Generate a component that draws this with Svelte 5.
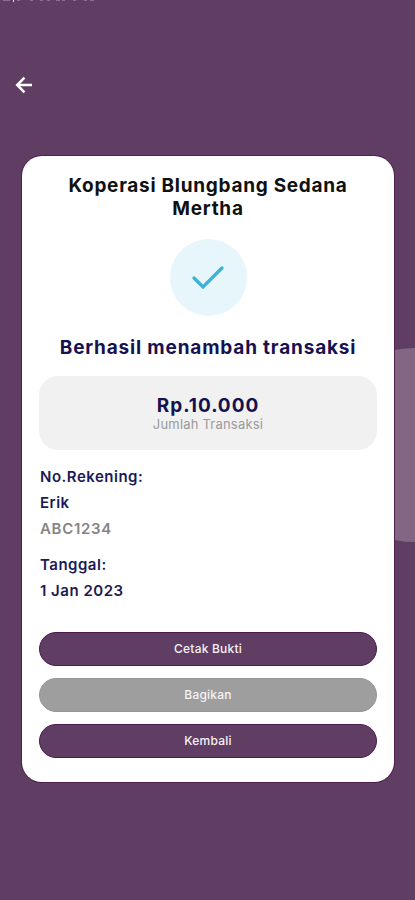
<script lang="ts">
    const details = [
        {
            label: "No.Rekening:",
            value: "Erik",
            note: "ABC1234",
        },
        {
            label: "Tanggal:",
            value: "1 Jan 2023",
            note: "",
        },
    ];

    const actions = [
        { label: "Cetak Bukti", muted: false },
        { label: "Bagikan", muted: true },
        { label: "Kembali", muted: false },
    ];
</script>

<div class="screen">
    <div class="backdrop-circle"></div>
    <svg class="top-marks" width="100" height="2" viewBox="0 0 100 2">
        <path d="M3 .5h7M17 .5h3M30 .5h3M40 .5h3M47 .5h3M56 .5h4M62 .5h3M73 .5h3M84 .5h3M90 .5h4" />
        <path class="bright" d="M13.5 0v2" />
    </svg>

    <header>
        <button class="back-btn" aria-label="Kembali">
            <svg
                width="24"
                height="24"
                viewBox="0 0 24 24"
                fill="none"
                stroke="currentColor"
                stroke-width="2.5"
            >
                <path d="M20 12H5.5" />
                <path d="M12.5 4.7 5.2 12l7.3 7.3" />
            </svg>
        </button>
    </header>

    <main class="card">
        <h1>Koperasi Blungbang Sedana Mertha</h1>

        <div class="check">
            <svg
                width="36"
                height="28"
                viewBox="0 0 36 28"
                fill="none"
                stroke="currentColor"
                stroke-width="3.3"
                stroke-linecap="round"
                stroke-linejoin="miter"
            >
                <path d="M4 14l9 9L32 4" />
            </svg>
        </div>

        <h2>Berhasil menambah transaksi</h2>

        <section class="amount">
            <strong>Rp.10.000</strong>
            <span>Jumlah Transaksi</span>
        </section>

        <section class="details">
            {#each details as item}
                <div class="detail">
                    <p>{item.label}</p>
                    <p>{item.value}</p>
                    {#if item.note}
                        <p class="note">{item.note}</p>
                    {/if}
                </div>
            {/each}
        </section>

        <div class="actions">
            {#each actions as action}
                <button class="action" class:muted={action.muted}>
                    {action.label}
                </button>
            {/each}
        </div>
    </main>
</div>

<style>
    :global(body) {
        margin: 0;
        background: #603e64;
    }

    .screen {
        position: relative;
        box-sizing: border-box;
        height: 900px;
        padding: 0 21px 0 22px;
        overflow: hidden;
        background: #603e64;
        font-family: Inter, Roboto, sans-serif;
    }

    .backdrop-circle {
        position: absolute;
        top: 348px;
        right: -97px;
        width: 194px;
        height: 194px;
        border-radius: 50%;
        background: #836584;
    }

    .top-marks {
        position: absolute;
        top: 0;
        left: 0;
        stroke: #8b708e;
    }

    .top-marks .bright {
        stroke: #e8dfe9;
    }

    header {
        display: flex;
        align-items: center;
        box-sizing: border-box;
        height: 156px;
        margin-left: -10px;
    }

    .back-btn {
        display: flex;
        margin-top: 13px;
        padding: 0;
        border: none;
        background: none;
        color: #fff;
        cursor: pointer;
    }

    .card {
        position: relative;
        display: flex;
        flex-direction: column;
        box-sizing: border-box;
        height: 626px;
        padding: 18px 17px 24px;
        border-radius: 20px;
        background: #fff;
        box-shadow: 0 0 0 1px #4f2050;
    }

    h1,
    h2,
    p {
        margin: 0;
    }

    h1 {
        padding: 0 20px;
        color: #111;
        font-size: 19px;
        font-weight: 700;
        line-height: 23px;
        letter-spacing: 0.72px;
        text-align: center;
    }

    .check {
        display: flex;
        align-items: center;
        justify-content: center;
        align-self: center;
        width: 77px;
        height: 77px;
        margin-top: 19px;
        border-radius: 50%;
        background: #e7f6fb;
        color: #3db2d5;
    }

    h2 {
        margin-top: 20px;
        color: #16124f;
        font-size: 19px;
        font-weight: 700;
        line-height: 24px;
        letter-spacing: 0.82px;
        text-align: center;
        white-space: nowrap;
    }

    .amount {
        display: flex;
        flex-direction: column;
        align-items: center;
        box-sizing: border-box;
        height: 74px;
        margin-top: 16px;
        padding-top: 18px;
        border-radius: 19px;
        background: #f1f1f1;
    }

    .amount strong {
        color: #16124f;
        font-size: 19px;
        line-height: 23px;
        letter-spacing: 0.95px;
    }

    .amount span {
        color: #9b9b9b;
        font-size: 13px;
        line-height: 15px;
        letter-spacing: 0.2px;
    }

    .details {
        display: flex;
        flex-direction: column;
        gap: 10px;
        margin-top: 14px;
        padding-left: 1px;
        color: #1c1a55;
        font-size: 15px;
        font-weight: 600;
        line-height: 26px;
        letter-spacing: 0.5px;
    }

    .note {
        color: #858585;
        letter-spacing: 0.7px;
    }

    .actions {
        display: flex;
        flex-direction: column;
        gap: 12px;
        margin-top: auto;
    }

    .action {
        box-sizing: border-box;
        height: 34px;
        padding: 0 0 2px;
        border: 1px solid #4c1c4c;
        border-radius: 17px;
        background: #603e64;
        color: #f6f2f6;
        font-family: inherit;
        font-size: 12px;
        font-weight: 500;
        letter-spacing: 0.2px;
        cursor: pointer;
    }

    .action.muted {
        border-color: #969696;
        background: #9e9e9e;
    }
</style>
